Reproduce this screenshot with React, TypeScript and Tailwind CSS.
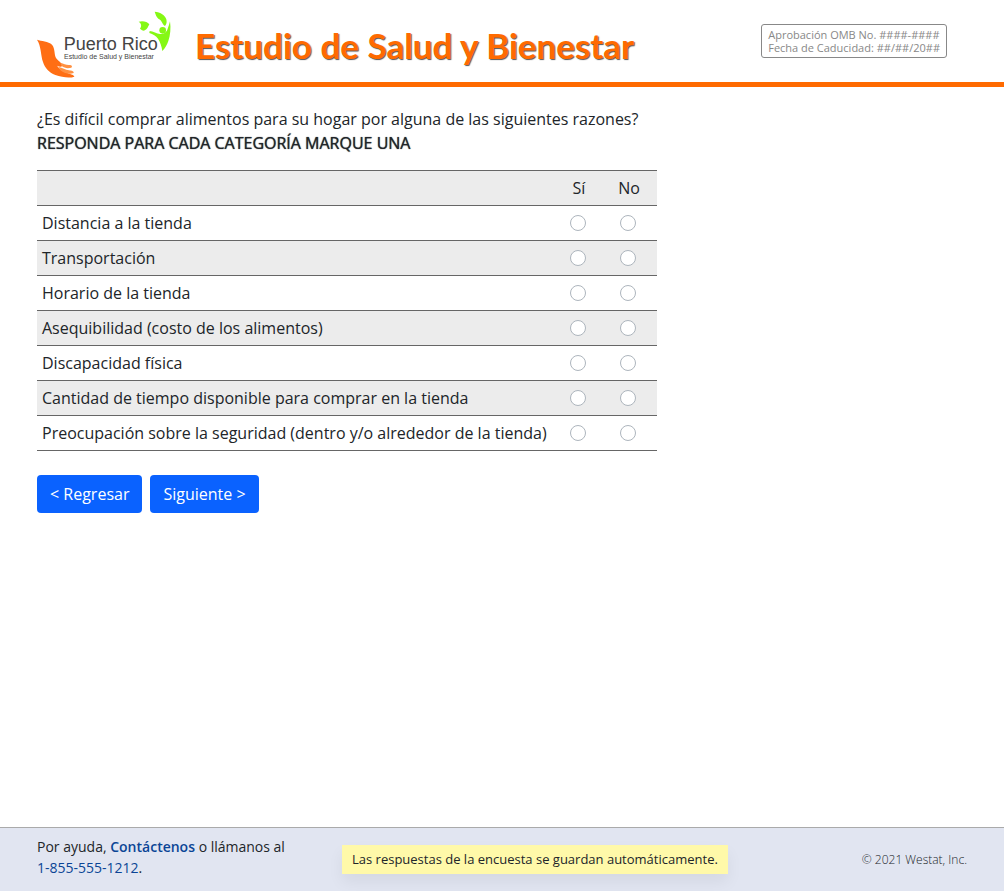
import { useState } from "react";

const reasons = [
  { id: "distancia", label: "Distancia a la tienda" },
  { id: "transportacion", label: "Transportación" },
  { id: "horario", label: "Horario de la tienda" },
  { id: "asequibilidad", label: "Asequibilidad (costo de los alimentos)" },
  { id: "discapacidad", label: "Discapacidad física" },
  { id: "tiempo", label: "Cantidad de tiempo disponible para comprar en la tienda" },
  { id: "seguridad", label: "Preocupación sobre la seguridad (dentro y/o alrededor de la tienda)" },
];

const options = [
  { value: "si", label: "Sí" },
  { value: "no", label: "No" },
];

function Logo() {
  return (
    <svg
      viewBox="21 18 402 204"
      className="h-[68px] w-[134px] shrink-0"
      role="img"
      aria-label="Puerto Rico, Estudio de Salud y Bienestar"
    >
      <path
        fill="#ff6e14"
        d="M21 104C34 109 55 108 66 119C76 131 72 148 78 159C84 168 96 173 97 181C97 187 88 185 81 182C88 192 98 199 112 204C124 208 133 211 133 215C119 220 96 217 76 210C56 202 45 189 39 171C32 150 34 124 21 104Z"
      />
      <g fill="#ff9142">
        <path d="M86 186C97 188 106 195 117 196C125 197 132 199 131 204C121 208 109 206 99 201C92 198 88 193 86 186Z" />
        <path d="M92 174C101 176 109 181 119 180C126 180 128 185 124 188C113 191 103 189 96 184C93 181 92 178 92 174Z" />
      </g>
      <g fill="#85f814">
        <path d="M374 20C392 22 405 30 409 43C411 51 410 58 405 63C395 56 397 46 385 41C379 36 377 28 374 20Z" />
        <path d="M326 50C339 46 352 50 358 58C354 65 352 74 342 77C336 77 333 73 330 71C335 64 335 56 326 50Z" />
        <path d="M420 49C423 70 421 91 415 108C411 119 406 129 397 138C395 122 390 111 384 101C378 93 369 88 358 84L359 78C370 79 380 86 390 87C402 88 410 81 413 71C416 64 418 57 420 49Z" />
        <circle cx="398" cy="76" r="10" />
      </g>
      <text x="101" y="134" className="fill-[#444444] font-['Liberation_Sans'] text-[54px]">
        Puerto Rico
      </text>
      <text x="102" y="163" className="fill-[#444444] font-['Liberation_Sans'] text-[21px]">
        Estudio de Salud y Bienestar
      </text>
    </svg>
  );
}

export default function App() {
  const [answers, setAnswers] = useState<Record<string, string>>({});

  function onAnswer(id: string, value: string) {
    setAnswers({ ...answers, [id]: value });
  }

  const buttonClass =
    "h-[38px] rounded bg-[#0a62ff] px-[13px] text-base text-white hover:bg-blue-700";

  return (
    <div className="flex min-h-screen flex-col bg-white font-['Open_Sans',sans-serif] text-base text-[#212529]">
      <header className="flex items-start border-b-[5px] border-[#ff6a00] pr-[57px] pb-[3px] pl-[37px]">
        <div className="flex flex-1 items-center gap-6 pt-[11px]">
          <Logo />
          <h1 className="font-[Lato,sans-serif] text-[35px] leading-[44px] font-bold whitespace-nowrap text-[#ff6a00] text-shadow-[1px_1px_1px_#555555]">
            Estudio de Salud y Bienestar
          </h1>
        </div>
        <p className="mt-6 rounded-[3px] border border-[#888888] px-[6px] py-[3px] text-[11px] leading-[13px] whitespace-nowrap text-[#888888]">
          Aprobación OMB No. ####-####
          <br />
          Fecha de Caducidad: ##/##/20##
        </p>
      </header>

      <main className="flex-1 px-[37px] pt-5">
        <p id="question">
          ¿Es difícil comprar alimentos para su hogar por alguna de las siguientes razones?
          <br />
          <strong className="font-medium text-shadow-[0_0_1px_#212529]">
            RESPONDA PARA CADA CATEGORÍA MARQUE UNA
          </strong>
        </p>

        <table
          aria-labelledby="question"
          className="mt-[15px] w-full max-w-[620px] table-fixed border-collapse border-y border-[#666666]"
        >
          <colgroup>
            <col />
            <col className="w-[50px]" />
            <col className="w-[54px]" />
          </colgroup>
          <thead>
            <tr className="h-[35px] border-b border-[#666666] bg-[#ececec]">
              <td></td>
              {options.map((o) => (
                <th key={o.value} scope="col" className="pl-[2px] font-normal last:pr-1">
                  {o.label}
                </th>
              ))}
            </tr>
          </thead>
          <tbody>
            {reasons.map((r) => (
              <tr key={r.id} className="h-[35px] border-b border-[#666666] even:bg-[#ececec]">
                <th scope="row" className="pl-[5px] text-left font-normal">
                  {r.label}
                </th>
                {options.map((o) => (
                  <td key={o.value} className="last:pr-1">
                    <input
                      type="radio"
                      name={r.id}
                      value={o.value}
                      aria-label={`${r.label}: ${o.label}`}
                      checked={answers[r.id] === o.value}
                      onChange={() => onAnswer(r.id, o.value)}
                      className="mx-auto block size-4 appearance-none rounded-full border border-[#adb5bd] bg-white checked:border-[5px] checked:border-[#0a62ff]"
                    />
                  </td>
                ))}
              </tr>
            ))}
          </tbody>
        </table>

        <div className="mt-6 flex gap-2">
          <button type="button" className={buttonClass}>
            &lt; Regresar
          </button>
          <button type="button" className={buttonClass}>
            Siguiente &gt;
          </button>
        </div>
      </main>

      <footer className="flex h-16 items-center border-t border-[#aaaaaa] bg-[#e1e5f1] px-[37px]">
        <p className="w-[305px] pb-[5px] text-sm leading-[21px]">
          Por ayuda,{" "}
          <a href="#contacto" className="font-semibold text-[#0b4596]">
            Contáctenos
          </a>{" "}
          o llámanos al
          <br />
          <a href="tel:1-855-555-1212" className="text-[#0b4596]">
            1-855-555-1212
          </a>
          .
        </p>
        <p className="bg-[#fff9a9] px-[10px] py-1 text-[13px] leading-[21px] whitespace-nowrap shadow-[0_8px_16px_rgba(0,0,0,0.06)]">
          Las respuestas de la encuesta se guardan automáticamente.
        </p>
        <p className="flex-1 text-right text-xs font-light">© 2021 Westat, Inc.</p>
      </footer>
    </div>
  );
}
